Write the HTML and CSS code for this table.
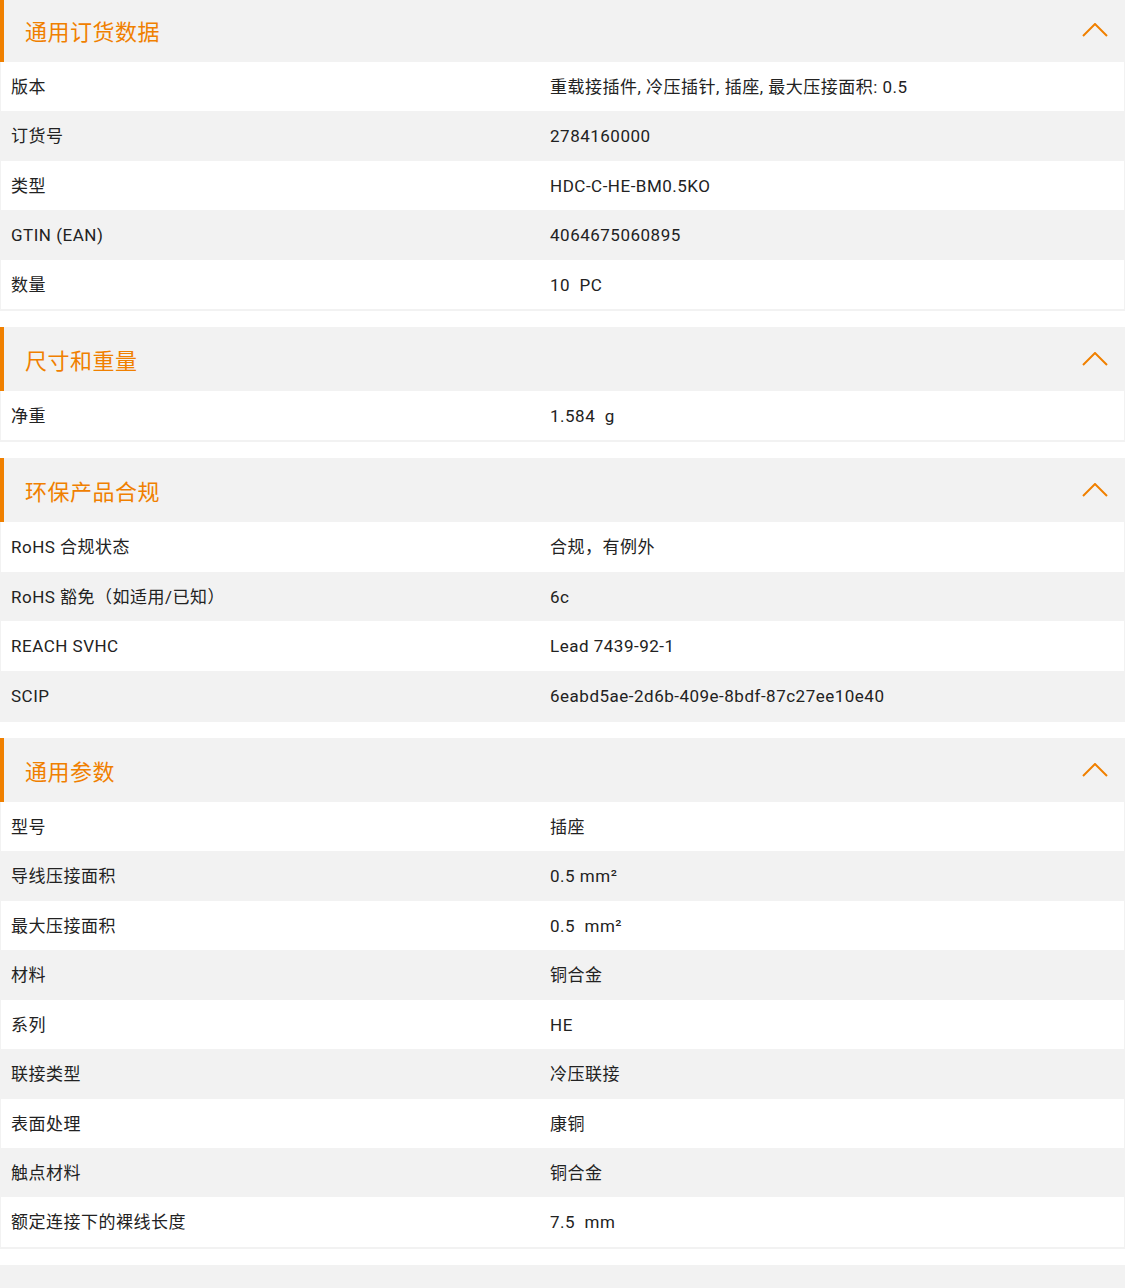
FILE: index.html
```html
<!DOCTYPE html>
<html lang="zh-CN">
<head>
    <meta charset="UTF-8">
    <meta name="viewport" content="width=device-width, initial-scale=1.0">
    <title>产品数据</title>
    <link rel="stylesheet" href="styles.css">
</head>
<body>

<div class="spec-list">

    <!-- 通用订货数据 -->
    <section class="spec-group open">
        <div class="group-head">
            <h3>通用订货数据</h3>
            <svg class="chevron" width="26" height="14" viewBox="0 0 26 14"><polyline points="1,13 13,1 25,13"/></svg>
        </div>
        <table class="spec-table">
            <tr><td class="label">版本</td><td>重载接插件, 冷压插针, 插座, 最大压接面积: 0.5</td></tr>
            <tr><td class="label">订货号</td><td>2784160000</td></tr>
            <tr><td class="label">类型</td><td>HDC-C-HE-BM0.5KO</td></tr>
            <tr><td class="label">GTIN (EAN)</td><td>4064675060895</td></tr>
            <tr><td class="label">数量</td><td>10&nbsp; PC</td></tr>
        </table>
    </section>

    <!-- 尺寸和重量 -->
    <section class="spec-group open">
        <div class="group-head">
            <h3>尺寸和重量</h3>
            <svg class="chevron" width="26" height="14" viewBox="0 0 26 14"><polyline points="1,13 13,1 25,13"/></svg>
        </div>
        <table class="spec-table">
            <tr><td class="label">净重</td><td>1.584&nbsp; g</td></tr>
        </table>
    </section>

    <!-- 环保产品合规 -->
    <section class="spec-group open">
        <div class="group-head">
            <h3>环保产品合规</h3>
            <svg class="chevron" width="26" height="14" viewBox="0 0 26 14"><polyline points="1,13 13,1 25,13"/></svg>
        </div>
        <table class="spec-table">
            <tr><td class="label">RoHS 合规状态</td><td>合规，有例外</td></tr>
            <tr><td class="label">RoHS 豁免（如适用/已知）</td><td>6c</td></tr>
            <tr><td class="label">REACH SVHC</td><td>Lead 7439-92-1</td></tr>
            <tr><td class="label">SCIP</td><td>6eabd5ae-2d6b-409e-8bdf-87c27ee10e40</td></tr>
        </table>
    </section>

    <!-- 通用参数 -->
    <section class="spec-group open">
        <div class="group-head">
            <h3>通用参数</h3>
            <svg class="chevron" width="26" height="14" viewBox="0 0 26 14"><polyline points="1,13 13,1 25,13"/></svg>
        </div>
        <table class="spec-table">
            <tr><td class="label">型号</td><td>插座</td></tr>
            <tr><td class="label">导线压接面积</td><td>0.5 mm²</td></tr>
            <tr><td class="label">最大压接面积</td><td>0.5&nbsp; mm²</td></tr>
            <tr><td class="label">材料</td><td>铜合金</td></tr>
            <tr><td class="label">系列</td><td>HE</td></tr>
            <tr><td class="label">联接类型</td><td>冷压联接</td></tr>
            <tr><td class="label">表面处理</td><td>康铜</td></tr>
            <tr><td class="label">触点材料</td><td>铜合金</td></tr>
            <tr><td class="label">额定连接下的裸线长度</td><td>7.5&nbsp; mm</td></tr>
        </table>
    </section>

    <!-- 下载 (收起) -->
    <section class="spec-group">
        <div class="group-head">
            <h3>下载</h3>
            <svg class="chevron" width="26" height="14" viewBox="0 0 26 14"><polyline points="1,1 13,13 25,1"/></svg>
        </div>
    </section>

</div>

</body>
</html>
```

FILE: styles.css
```css
/* tampilan umum */
body {
    margin: 0;
    padding: 0;
    background-color: #ffffff;
    color: #222;
    font-family: Roboto, "Noto Sans CJK SC", sans-serif;
}
.spec-list {
    margin-top: -2px;
}
.spec-group {
    margin-bottom: 16px;
}

/* judul grup */
.group-head {
    display: flex;
    align-items: center;
    justify-content: space-between;
    height: 64px;
    box-sizing: border-box;
    padding: 0 17px 0 21px;
    background-color: #f2f2f2;
    border-left: 4px solid transparent;
}
.group-head h3 {
    margin: 0;
    font-size: 22px;
    font-weight: normal;
    letter-spacing: 0.5px;
    color: #222;
}
.chevron {
    display: block;
    fill: none;
    stroke: #f08000;
    stroke-width: 2;
}
.spec-group.open .group-head {
    border-left-color: #f08000;
}
.spec-group.open .group-head h3 {
    color: #f08000;
}

/* tabel data */
.spec-table {
    width: 100%;
    border-collapse: separate;
    border-spacing: 0;
    border: 1px solid #f2f2f2;
    border-top: none;
    border-bottom-width: 2px;
}
.spec-table td {
    padding: 13px 10px 11px;
    line-height: 25.4px;
    font-size: 17px;
    letter-spacing: 0.5px;
    text-align: left;
    vertical-align: middle;
}
.spec-table td.label {
    width: 48%;
}
.spec-table tr:nth-child(even) td {
    background-color: #f2f2f2;
}
```
